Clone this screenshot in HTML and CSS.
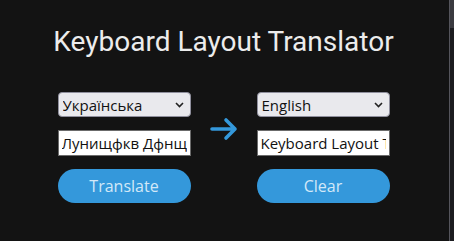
FILE: index.html
```html
<!DOCTYPE html>
<html lang="en">
<head>
<meta charset="utf-8">
<title>Keyboard Layout Translator</title>
<link rel="stylesheet" href="styles.css">
</head>
<body>
<main class="app">
  <h1 class="title">Keyboard Layout Translator</h1>
  <div class="panel">
    <div class="col">
      <div class="select-wrap">
        <select class="select"><option>Українська</option><option>English</option></select>
        <svg class="chev" width="9" height="6" viewBox="0 0 9 6"><path d="M1 1l3.5 3.5L8 1" fill="none" stroke="#222" stroke-width="1.6"/></svg>
      </div>
      <input class="field" type="text" value="Лунищфкв Дфнщге Екфтудфещк">
      <button class="btn">Translate</button>
    </div>
    <div class="arrow">
      <svg width="30" height="24" viewBox="0 0 30 24"><path d="M3 12H26M17 3l9 9-9 9" fill="none" stroke="#3498db" stroke-width="3.6" stroke-linecap="round" stroke-linejoin="round"/></svg>
    </div>
    <div class="col">
      <div class="select-wrap">
        <select class="select"><option>English</option><option>Українська</option></select>
        <svg class="chev" width="9" height="6" viewBox="0 0 9 6"><path d="M1 1l3.5 3.5L8 1" fill="none" stroke="#222" stroke-width="1.6"/></svg>
      </div>
      <input class="field" type="text" value="Keyboard Layout Translator">
      <button class="btn">Clear</button>
    </div>
  </div>
</main>
<div class="scrollbar"><div class="thumb"></div></div>
</body>
</html>
```
FILE: styles.css
```css
html, body {
  margin: 0;
  padding: 0;
  background: #131313;
  height: 100%;
  overflow: hidden;
}
.app {
  display: flex;
  flex-direction: column;
  align-items: center;
  width: calc(100% - 7px);
  padding-top: 22px;
}
.title {
  margin: 0;
  font-family: Roboto, "Liberation Sans", sans-serif;
  font-weight: 400;
  font-size: 28px;
  line-height: 39px;
  color: #ececec;
}
.panel {
  display: flex;
  align-items: flex-start;
  gap: 18px;
  margin-top: 31px;
}
.col {
  display: flex;
  flex-direction: column;
  gap: 13px;
  width: 133px;
}
.select-wrap {
  position: relative;
}
.select {
  appearance: none;
  -webkit-appearance: none;
  width: 100%;
  height: 25px;
  box-sizing: border-box;
  margin: 0;
  padding: 0 0 0 4px;
  background: #e9e9ed;
  border: 1px solid #8f8f9d;
  border-radius: 4px;
  font-family: "Open Sans", "Noto Sans", sans-serif;
  font-size: 15px;
  color: #111;
}
.chev {
  position: absolute;
  right: 7px;
  top: 10px;
  pointer-events: none;
}
.field {
  width: 100%;
  height: 26px;
  box-sizing: border-box;
  margin: 0;
  padding: 0 3px;
  background: #fff;
  border: 1px solid #6b6b6b;
  border-radius: 0;
  font-family: "Open Sans", "Noto Sans", sans-serif;
  font-size: 15px;
  color: #111;
  outline: none;
}
.btn {
  width: 100%;
  height: 34px;
  margin: 0;
  border: none;
  border-radius: 17px;
  background: #3498db;
  color: #d2e8f8;
  font-family: "Open Sans", "Noto Sans", sans-serif;
  font-size: 16px;
}
.arrow {
  display: flex;
  width: 30px;
  margin-top: 25px;
}
.scrollbar {
  position: fixed;
  top: 0;
  right: 0;
  width: 4px;
  height: 100%;
  background: #1c1c20;
  border-left: 1px solid #55555c;
}
.thumb {
  height: 28px;
  background: #3a3a40;
}
```
